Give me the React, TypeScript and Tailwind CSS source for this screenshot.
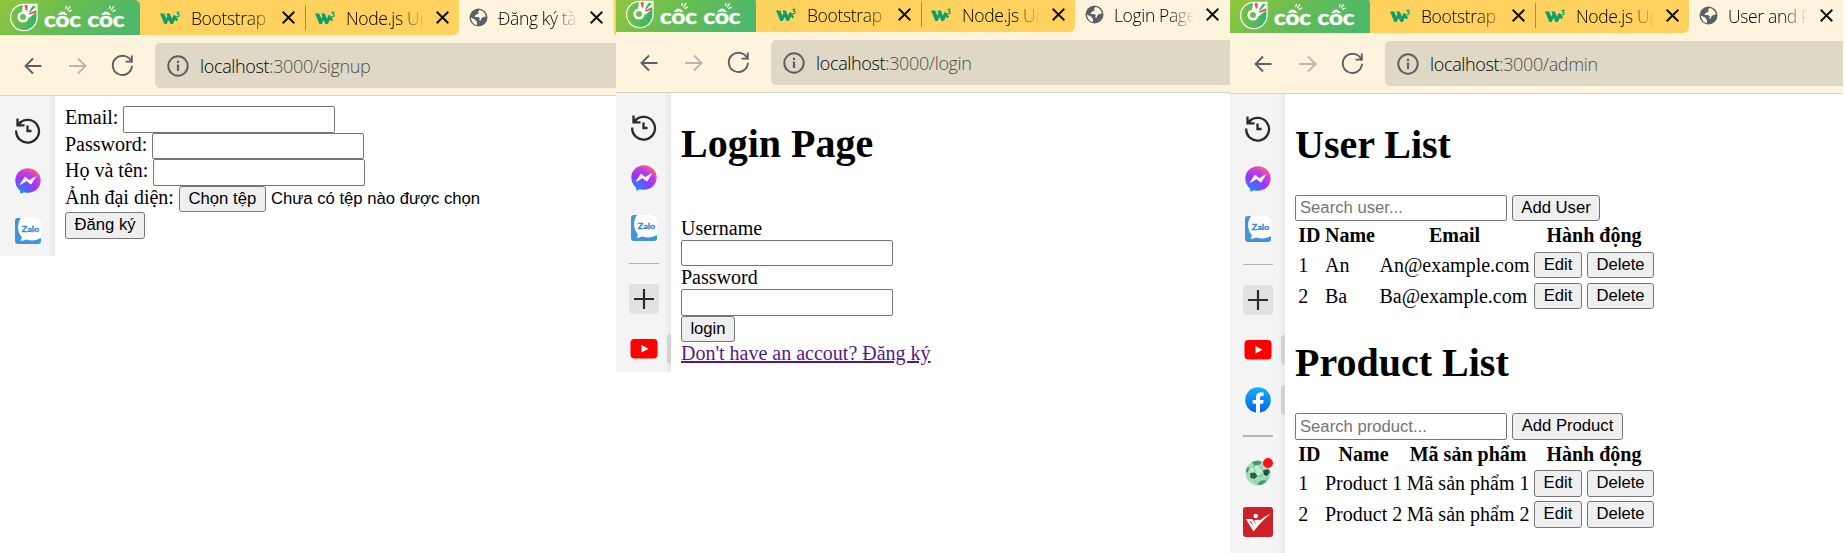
import React from "react";

function CocCocLogo() {
  return (
    <svg className="block h-[35px] w-[140px] shrink-0" viewBox="0 0 140 35">
      <defs>
        <linearGradient id="cc" x1="0" y1="0" x2="1" y2="0.25">
          <stop offset="0" stopColor="#93c83d" />
          <stop offset="0.5" stopColor="#69bd50" />
          <stop offset="1" stopColor="#4eb96a" />
        </linearGradient>
        <linearGradient id="ccd" x1="0" y1="0" x2="1" y2="0">
          <stop offset="0" stopColor="#7cc242" />
          <stop offset="1" stopColor="#2fb36a" />
        </linearGradient>
      </defs>
      <path d="M0 0H135Q140 1 140 6V35H0Z" fill="url(#cc)" />
      <path d="M37 4.300H24A13.200 13.200 0 1 0 37 17.500Z" fill="url(#ccd)" stroke="#fff" strokeWidth="1.200" />
      <path d="M23 4.500H36.500V12L29 18L22 12Z" fill="#fff" />
      <circle cx="23" cy="17" r="4.300" fill="#6abf4b" stroke="#fff" strokeWidth="2.600" />
      <path d="M24.500 5.300L27.800 5L27.300 10.500L25.700 10.500Z" fill="#f0503c" />
      <path d="M33 5.500L35.800 6.500L30 12.500L29 11.500Z" fill="#3bb267" />
      <path d="M36 10.200L36.300 12.400L29.500 14.800L28.900 13.200Z" fill="#f0503c" />
      <g fill="#fff" stroke="#fff" strokeWidth="0.500" fontSize="20" fontWeight="700" fontFamily="Lato, sans-serif">
        <text x="44" y="27" textLength="37" lengthAdjust="spacingAndGlyphs">côc</text>
        <text x="87.500" y="27" textLength="37" lengthAdjust="spacingAndGlyphs">côc</text>
      </g>
      <g stroke="#fff" strokeWidth="1.300" strokeLinecap="round">
        <path d="M65.700 8.500L66.300 6.300M67.500 9.800L69.800 6.600M69 11.300L71.500 10.200" />
        <path d="M109.500 8.500L110.100 6.300M111.300 9.800L113.600 6.600M112.800 11.300L115.300 10.200" />
      </g>
    </svg>
  );
}

function W3Icon() {
  return (
    <svg className="block h-[14px] w-[21px] shrink-0" viewBox="0 0 21 14">
      <path d="M0 2.500H4.200L6.400 7.800L7.400 5.200L6.400 2.500H9.800L12 7.800L13.200 4.800Q14.200 3.500 15.200 4.500L18 8.500L16.500 10.500L15 8.500L12.800 13H10.600L8.600 9L6.600 13H4.400Z" fill="#0a9f6b" />
      <path d="M16.400 1.200H18.900L17.600 2.900Q19.300 3 19.300 4.300Q19.100 5.900 16.400 5.500" fill="none" stroke="#0a9f6b" strokeWidth="1.100" />
    </svg>
  );
}

function GlobeIcon() {
  return (
    <svg className="block size-[19px] shrink-0" viewBox="0 0 19 19">
      <circle cx="9.500" cy="9.500" r="9" fill="#5b5f66" />
      <path d="M10.500 1.800L9 4L9.700 5.500L6.500 7L5.500 9H9L11 10.500L10 12L11.500 13L12 11L14 9L17 8.500Q16 3.500 10.500 1.800Z" fill="#fef4de" />
      <path d="M1.800 9.500L6 11.500L8 14L8 17.200Q2.500 16 1.800 9.500Z" fill="#fef4de" />
    </svg>
  );
}

function CloseIcon() {
  return (
    <svg className="block size-[13px] shrink-0" viewBox="0 0 13 13">
      <path d="M0.700 0.700L12.300 12.300M12.300 0.700L0.700 12.300" stroke="#111" strokeWidth="2" />
    </svg>
  );
}

const tabText =
  "h-[26px] whitespace-nowrap font-['Open_Sans'] font-light text-[17.500px] leading-[26px] tracking-[-0.350px] text-black";

function TabBar({ title, height }: { title: string; height: string }) {
  return (
    <div className={`flex shrink-0 flex-col justify-end overflow-hidden ${height}`}>
      <div className="flex h-[35px] shrink-0 bg-[#fef4de]">
        <div className="flex w-[459px] shrink-0 rounded-br-[6px] bg-[#ffd15f]">
          <CocCocLogo />
          <div className="my-[5px] flex w-[166px] shrink-0 items-center border-r border-[#a88b45] pl-5">
            <W3Icon />
            <div className={`${tabText} ml-[10px] w-[76px] [mask-image:linear-gradient(to_right,#000_75%,rgba(0,0,0,0.35))]`}>Bootstrap</div>
            <div className="ml-[15px]"><CloseIcon /></div>
          </div>
          <div className="flex items-center pl-[9px]">
            <W3Icon />
            <div className={`${tabText} ml-[10px] w-[78px] [mask-image:linear-gradient(to_right,#000_68%,transparent)]`}>Node.js Up</div>
            <div className="ml-[12px]"><CloseIcon /></div>
          </div>
        </div>
        <div className="flex w-[155px] shrink-0 items-center rounded-t-[6px] bg-[#fef4de] pl-[10px]">
          <GlobeIcon />
          <div className={`${tabText} ml-[10px] w-[80px] [mask-image:linear-gradient(to_right,#000_68%,transparent)]`}>{title}</div>
          <div className="ml-[12px]"><CloseIcon /></div>
        </div>
        <div className="grow rounded-bl-[6px] bg-[#ffd15f]" />
      </div>
    </div>
  );
}

function Toolbar({ path }: { path: string }) {
  return (
    <div className="flex h-[61px] shrink-0 items-start border-b border-[#d9d3c0] bg-[#fef4de] pt-2">
      <div className="flex h-[45px] w-[155px] shrink-0 items-center pl-6">
        <svg className="block size-[18px] shrink-0" viewBox="0 0 18 18">
          <path d="M17.500 9H2M9 1.500L1.500 9L9 16.500" fill="none" stroke="#5b5f66" strokeWidth="1.900" />
        </svg>
        <svg className="ml-[27px] block size-[18px] shrink-0" viewBox="0 0 18 18">
          <path d="M0 9H16M9 1.500L16.500 9L9 16.500" fill="none" stroke="#b9b6ae" strokeWidth="1.900" />
        </svg>
        <svg className="ml-[24px] block size-[23px] shrink-0" viewBox="0 0 23 23">
          <path d="M20.600 8.600A9.600 9.600 0 1 0 21 11.800" fill="none" stroke="#5b5f66" strokeWidth="1.900" />
          <path d="M20.800 1.500V7.600H14.500" fill="none" stroke="#5b5f66" strokeWidth="1.900" />
        </svg>
      </div>
      <div className="flex h-[45px] grow items-center rounded-l-[5px] bg-[#dfd8c4] pl-3">
        <svg className="block size-[22px] shrink-0" viewBox="0 0 22 22">
          <circle cx="11" cy="11" r="9.700" fill="none" stroke="#5b5f66" strokeWidth="2" />
          <path d="M11 9.500V16M11 5.700V8" stroke="#5b5f66" strokeWidth="2.200" />
        </svg>
        <div className="ml-[11px] whitespace-nowrap font-['Open_Sans'] font-light text-[18px] leading-[26px] tracking-[-0.350px] text-[#4f4e4b]">
          <span className="text-black">localhost</span>:3000/{path}
        </div>
      </div>
    </div>
  );
}

function HistoryIcon() {
  return (
    <svg className="block size-[26px]" viewBox="0 0 26 26">
      <path d="M1.200 12.500A11.400 11.400 0 1 0 4.300 5.400" fill="none" stroke="#2b2b2b" strokeWidth="2.300" />
      <path d="M2.500 0.500V7.300H9.500M3 6.500L6 4" fill="none" stroke="#2b2b2b" strokeWidth="2.300" />
      <path d="M12.500 7.500V13H16.500" fill="none" stroke="#2b2b2b" strokeWidth="2.300" />
    </svg>
  );
}

function MessengerIcon() {
  return (
    <svg className="block size-[26px]" viewBox="0 0 26 26">
      <defs>
        <radialGradient id="msg" cx="0.2" cy="1" r="1.100">
          <stop offset="0" stopColor="#0a95ff" />
          <stop offset="0.55" stopColor="#9a35fb" />
          <stop offset="0.8" stopColor="#c83fdc" />
          <stop offset="1" stopColor="#ff6968" />
        </radialGradient>
      </defs>
      <path d="M13 0.300C20 0.300 25.700 5.500 25.700 12.500S20 24.700 13 24.700Q10.800 24.700 9 24.200L5.500 25.700L5 22.500C2 20 0.300 16.500 0.300 12.500C0.300 5.500 6 0.300 13 0.300Z" fill="url(#msg)" />
      <path d="M5.200 16.500L10 9L14.300 12.500L20.500 8.800L16 16.200L11.500 12.800Z" fill="#fff" stroke="#fff" strokeWidth="0.800" />
    </svg>
  );
}

function ZaloIcon() {
  return (
    <svg className="block size-[26px]" viewBox="0 0 26 26">
      <rect width="26" height="26" rx="3" fill="#3f94dc" />
      <path d="M6 0H23Q26 0 26 3V20Q20 24 11 21.500Q8.500 23 5.500 22.500Q7 21 6.800 19C2 14 2 5 6 0Z" fill="#fff" />
      <text x="6.800" y="14" fontSize="8" fontWeight="700" fontFamily="Lato, sans-serif" fill="#2f86cf" stroke="#2f86cf" strokeWidth="0.300" textLength="17.500" lengthAdjust="spacingAndGlyphs">Zalo</text>
    </svg>
  );
}

function YoutubeIcon() {
  return (
    <svg className="block h-[20px] w-[28px]" viewBox="0 0 28 20">
      <rect x="0.500" width="27" height="19.500" rx="4" fill="#fe0000" />
      <path d="M11.500 6L18.500 9.800L11.500 13.500Z" fill="#fff" />
    </svg>
  );
}

function FacebookIcon() {
  return (
    <svg className="block size-[26px]" viewBox="0 0 26 26">
      <defs>
        <linearGradient id="fb" x1="0" y1="0" x2="0" y2="1">
          <stop offset="0" stopColor="#19acfa" />
          <stop offset="1" stopColor="#0865e0" />
        </linearGradient>
      </defs>
      <circle cx="13" cy="13" r="12.800" fill="url(#fb)" />
      <path d="M11 25.700V16.800H7.800V13H11V10.500Q11 5.600 15.500 5.600H18.500V9H16.700Q15 9 15 10.700V13H18.600L18 16.800H15V25.700Z" fill="#fff" />
    </svg>
  );
}

function BallIcon() {
  return (
    <svg className="block h-[28px] w-[28px]" viewBox="0 0 28 28">
      <circle cx="13" cy="15" r="12.500" fill="#a5dcb8" />
      <circle cx="11" cy="12" r="6" fill="#c3ebd0" />
      <path d="M7 4L13 2.500L17 4L14 7L9 7.500Z" fill="#3f9a68" />
      <path d="M18 12.500L23 11L25 14L22 18L19 17Z" fill="#24563f" />
      <path d="M5 15L10 14.500L12.500 18L9.500 21L5.500 20Z" fill="#2b6247" />
      <path d="M0.800 13L2.500 9L4.200 10L2.500 15Z" fill="#3f9a68" />
      <path d="M15 23L20 22L21 24L16 27L12.500 26.500Z" fill="#3f9a68" />
      <path d="M9 8L10 14M14 7.500L17 12M13 18.500L18 17.500M9.500 22L12.500 26M22 19L21 23M4.500 10L9 8" stroke="#7cc195" fill="none" />
      <circle cx="23" cy="5" r="5" fill="#fb1616" />
    </svg>
  );
}

function CheckFigureIcon() {
  return (
    <svg className="block size-[30px]" viewBox="0 0 30 30">
      <rect width="30" height="30" rx="3" fill="#cf2027" />
      <path d="M2.800 12H9.500L12.500 17.500Q19 10.500 28 6.500Q19 13.500 10.500 24.500Z" fill="#fff" />
      <path d="M11 13.500L14.500 12.800L18.500 13L13.500 19Z" fill="#fff" />
      <path d="M6.500 14.200H8.200L10.500 19Z" fill="#cf2027" />
      <circle cx="12.700" cy="9" r="2.300" fill="#fff" />
    </svg>
  );
}

function Nub({ children }: { children: React.ReactNode }) {
  return (
    <div className="flex h-[30px] w-[55px] items-center justify-between pl-[14px]">
      {children}
      <div className="h-[30px] w-[4px] rounded-l-[4px] bg-[#d2d2d2]" />
    </div>
  );
}

function Sidebar({ level }: { level: number }) {
  return (
    <div className="flex w-[55px] shrink-0 flex-col overflow-hidden bg-[linear-gradient(to_right,#f4f4f4_48px,#e9e9e9_55px)] pt-[22px]">
      <div className="ml-[15px] shrink-0"><HistoryIcon /></div>
      <div className="mt-[24px] ml-[15px] shrink-0"><MessengerIcon /></div>
      <div className="mt-[24px] ml-[15px] shrink-0"><ZaloIcon /></div>
      {level > 1 && (
        <>
          <div className="mt-[22px] ml-[13px] h-px w-[30px] shrink-0 bg-[#b4b4b4]" />
          <div className="mt-[20px] ml-[13px] flex size-[30px] shrink-0 items-center justify-center rounded-[4px] bg-[#e2e2e2]">
            <svg className="block size-[20px]" viewBox="0 0 20 20">
              <path d="M10 0V20M0 10H20" stroke="#2b2b2b" strokeWidth="2.200" />
            </svg>
          </div>
          <div className="mt-[20px] shrink-0"><Nub><YoutubeIcon /></Nub></div>
        </>
      )}
      {level > 2 && (
        <>
          <div className="mt-[20px] shrink-0"><Nub><div className="ml-px"><FacebookIcon /></div></Nub></div>
          <div className="mt-[20px] ml-[13px] h-[2px] w-[30px] shrink-0 bg-[#b4b4b4]" />
          <div className="mt-[21px] ml-[15px] shrink-0"><BallIcon /></div>
          <div className="mt-[21px] ml-[13px] shrink-0"><CheckFigureIcon /></div>
        </>
      )}
    </div>
  );
}

function Field({ h = "h-[26px]", placeholder }: { h?: string; placeholder?: string }) {
  return (
    <input
      placeholder={placeholder}
      className={`block w-[212px] shrink-0 rounded-[2px] border border-[#767676] bg-white px-[4px] font-['Liberation_Sans'] text-[16.670px] placeholder:text-[#757575] ${h}`}
    />
  );
}

function Btn({ w, h = "h-[26px]", children }: { w: string; h?: string; children: React.ReactNode }) {
  return (
    <button
      className={`flex shrink-0 items-center justify-center rounded-[3px] border border-[#767676] bg-[#efefef] pb-[2px] font-['Liberation_Sans'] text-[16.670px] leading-[19px] whitespace-nowrap text-black ${w} ${h}`}
    >
      {children}
    </button>
  );
}

function Screen({
  width, barHeight, title, path, level, bodyHeight, children,
}: {
  width: string; barHeight: string; title: string; path: string; level: number; bodyHeight: string; children: React.ReactNode;
}) {
  return (
    <section className={`flex shrink-0 flex-col overflow-hidden ${width}`}>
      <TabBar title={title} height={barHeight} />
      <Toolbar path={path} />
      <div className={`flex shrink-0 ${bodyHeight}`}>
        <Sidebar level={level} />
        <div className="grow pt-[10px] pl-[10px] font-['Liberation_Serif'] text-[20px] leading-[23px] text-black">{children}</div>
      </div>
    </section>
  );
}

const row = "flex items-start gap-[5px] whitespace-nowrap";

function SignupForm() {
  return (
    <>
      <div className={`${row} h-[27px]`}><label>Email:</label><Field h="h-[27px]" /></div>
      <div className={`${row} h-[26px]`}><label>Password:</label><Field /></div>
      <div className={`${row} h-[27px]`}><label>Họ và tên:</label><Field h="h-[27px]" /></div>
      <div className={`${row} h-[26px]`}>
        <label>Ảnh đại diện:</label>
        <Btn w="w-[87px]">Chọn tệp</Btn>
        <span className="font-['Liberation_Sans'] text-[16.670px] leading-[25px]">Chưa có tệp nào được chọn</span>
      </div>
      <Btn w="w-[80px]" h="h-[27px]">Đăng ký</Btn>
    </>
  );
}

function LoginForm() {
  return (
    <>
      <h1 className="mt-[18px] text-[40px] leading-[46px] font-bold">Login Page</h1>
      <div className="mt-[50px]">Username</div>
      <Field />
      <div>Password</div>
      <Field h="h-[27px]" />
      <Btn w="w-[54px]">login</Btn>
      <a className="block text-[#551a8b] underline">Don't have an accout? Đăng ký</a>
    </>
  );
}

function DataTable({ head, rows, headHeight, buttonHeight }: { head: string[]; rows: string[][]; headHeight: string; buttonHeight: string }) {
  return (
    <table className="border-separate border-spacing-x-[2.500px] border-spacing-y-[2px] whitespace-nowrap">
      <thead>
        <tr className={headHeight}>
          {head.map((h) => <th key={h} className="px-[1.250px] pt-px pb-0 text-center align-top font-bold">{h}</th>)}
        </tr>
      </thead>
      <tbody>
        {rows.map((r) => (
          <tr key={r[0]} className="h-[29px]">
            {r.map((c) => <td key={c} className="px-[1.250px] pt-[3px] pb-0 align-top">{c}</td>)}
            <td className="px-[1.250px] pt-px pb-0 align-top">
              <div className="flex gap-[5px]">
                <Btn w="w-[48px]" h={buttonHeight}>Edit</Btn>
                <Btn w="w-[67px]" h={buttonHeight}>Delete</Btn>
              </div>
            </td>
          </tr>
        ))}
      </tbody>
    </table>
  );
}

function AdminPage() {
  return (
    <>
      <h1 className="mt-[18px] text-[40px] leading-[46px] font-bold">User List</h1>
      <div className="mt-[27px] flex gap-[5px]">
        <Field placeholder="Search user..." />
        <Btn w="w-[88px]">Add User</Btn>
      </div>
      <DataTable
        head={["ID", "Name", "Email", "Hành động"]}
        rows={[["1", "An", "An@example.com"], ["2", "Ba", "Ba@example.com"]]}
        headHeight="h-[26px]"
        buttonHeight="h-[26px]"
      />
      <h1 className="mt-[27px] text-[40px] leading-[46px] font-bold">Product List</h1>
      <div className="mt-[27px] flex gap-[5px]">
        <Field h="h-[27px]" placeholder="Search product..." />
        <Btn w="w-[111px]" h="h-[27px]">Add Product</Btn>
      </div>
      <DataTable
        head={["ID", "Name", "Mã sản phẩm", "Hành động"]}
        rows={[["1", "Product 1", "Mã sản phẩm 1"], ["2", "Product 2", "Mã sản phẩm 2"]]}
        headHeight="h-[25px]"
        buttonHeight="h-[27px]"
      />
    </>
  );
}

export default function App() {
  return (
    <main className="flex h-[553px] w-[1846px] items-start overflow-hidden bg-white">
      <Screen width="w-[616px]" barHeight="h-[35px]" title="Đăng ký tà" path="signup" level={1} bodyHeight="h-[160px]">
        <SignupForm />
      </Screen>
      <Screen width="w-[614px]" barHeight="h-[32px]" title="Login Page" path="login" level={2} bodyHeight="h-[279px]">
        <LoginForm />
      </Screen>
      <Screen width="w-[613px]" barHeight="h-[33px]" title="User and P" path="admin" level={3} bodyHeight="h-[459px]">
        <AdminPage />
      </Screen>
    </main>
  );
}
